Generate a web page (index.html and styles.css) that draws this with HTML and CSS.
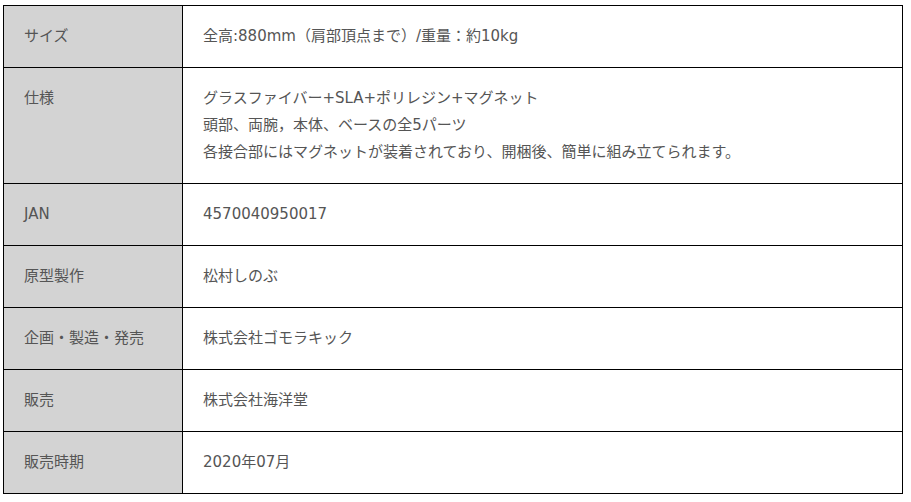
FILE: index.html
```html
<!DOCTYPE html>
<html lang="ja">
<head>
<meta charset="utf-8">
<link rel="stylesheet" href="styles.css">
</head>
<body>
<table class="spec">
<tr><th>サイズ</th><td>全高:880mm（肩部頂点まで）/重量：約10kg</td></tr>
<tr><th>仕様</th><td>グラスファイバー+SLA+ポリレジン+マグネット<br>頭部、両腕，本体、ベースの全5パーツ<br>各接合部にはマグネットが装着されており、開梱後、簡単に組み立てられます。</td></tr>
<tr><th>JAN</th><td>4570040950017</td></tr>
<tr><th>原型製作</th><td>松村しのぶ</td></tr>
<tr><th>企画・製造・発売</th><td>株式会社ゴモラキック</td></tr>
<tr><th>販売</th><td>株式会社海洋堂</td></tr>
<tr><th>販売時期</th><td>2020年07月</td></tr>
</table>
</body>
</html>
```
FILE: styles.css
```css
html, body {
  margin: 0;
  background: #fff;
}
body {
  padding: 5px 0 0 3px;
  font-family: "DejaVu Sans", "Noto Sans CJK JP", sans-serif;
  font-size: 15px;
  color: #555;
}
.spec {
  border-collapse: collapse;
  width: 900px;
}
.spec th, .spec td {
  border: 1px solid #000;
  padding: 17px 18px 17px 20px;
  line-height: 27px;
  text-align: left;
  vertical-align: top;
  font-weight: normal;
}
.spec th {
  width: 140px;
  background: #d3d3d3;
}
```
